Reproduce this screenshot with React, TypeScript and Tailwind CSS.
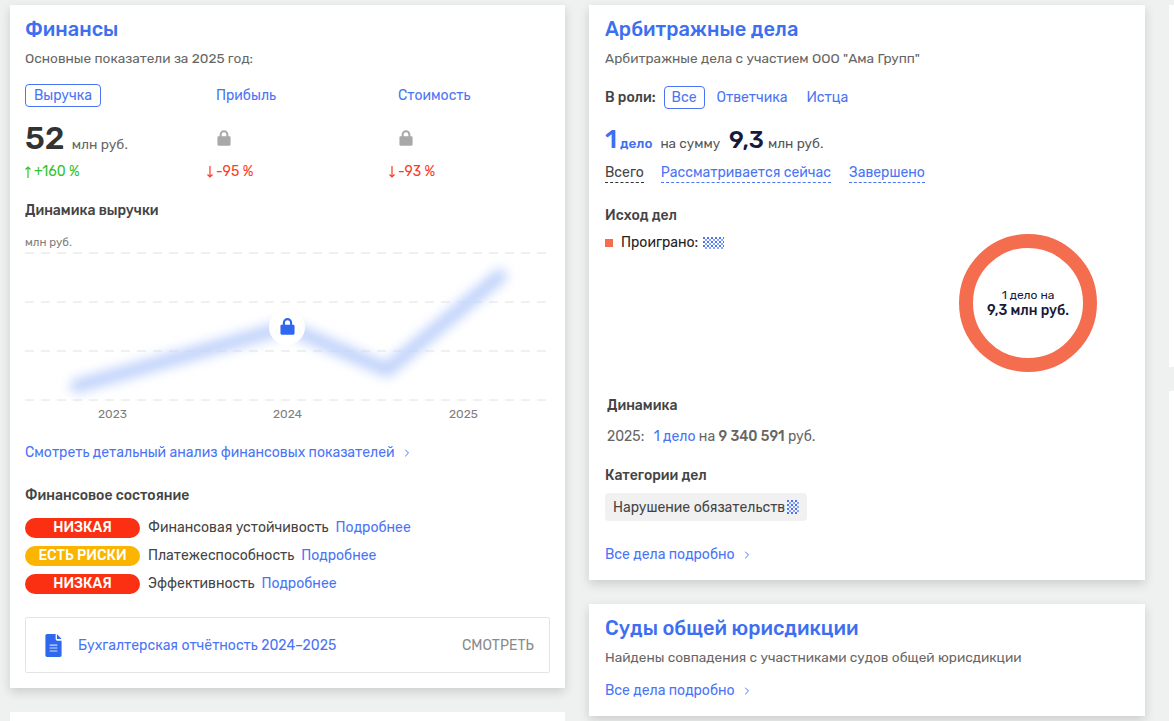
import { ChevronRight } from 'lucide-react'

const font = { fontFamily: 'Rubik, Inter, sans-serif' }

function Lock({ className }: { className: string }) {
  return (
    <svg viewBox="0 0 16 18" className={className} fill="currentColor">
      <path d="M3 7V5a5 5 0 0 1 10 0v2h1.200c.7 0 1.300.6 1.300 1.300v8.200c0 .7-.6 1.300-1.300 1.300H1.800C1.100 17.800.5 17.200.5 16.500V8.300C.5 7.600 1.100 7 1.800 7H3zm2.300 0h5.400V5a2.700 2.700 0 0 0-5.400 0v2z" />
    </svg>
  )
}

function Delta({ up, value }: { up?: boolean; value: string }) {
  return (
    <div className={`flex items-center gap-[2px] text-[14px] leading-5 ${up ? 'text-[#2fc52f]' : 'text-[#fb3b26]'}`}>
      <svg viewBox="0 0 8 12" className="h-3 w-2" fill="none" stroke="currentColor" strokeWidth="1.200">
        {up ? <path d="M4 12V1M1.500 3.500 4 1l2.500 2.500" /> : <path d="M4 0v11M1.500 8.500 4 11l2.500-2.500" />}
      </svg>
      {value}
    </div>
  )
}

function Pattern({ w, h }: { w: number; h: number }) {
  return (
    <svg width={w} height={h} className="inline-block">
      <defs>
        <pattern id={`p${w}`} width="4" height="4" patternUnits="userSpaceOnUse">
          <rect width="2" height="2" fill="#4f74f0" />
          <rect x="2" y="2" width="2" height="2" fill="#8aa4f6" />
        </pattern>
      </defs>
      <rect width={w} height={h} fill={`url(#p${w})`} />
    </svg>
  )
}

function MoreLink({ children }: { children: string }) {
  return (
    <a className="flex items-center gap-[6px] text-[14px] leading-5 text-[#4a74f5]">
      {children}
      <ChevronRight className="h-3 w-3" strokeWidth={2} />
    </a>
  )
}

function StatusRow({ label, name, tone }: { label: string; name: string; tone: string }) {
  return (
    <div className="flex h-[21px] items-center text-[14px]">
      <span className={`h-[20px] w-[115px] rounded-full text-center leading-5 font-medium text-white ${tone}`}>{label}</span>
      <span className="ml-2 text-[#444]">{name}</span>
      <a className="ml-[7px] text-[#4a74f5]">Подробнее</a>
    </div>
  )
}

function Chart() {
  return (
    <div className="relative mt-[2px] h-[184px]">
      <svg viewBox="0 0 525 184" className="absolute inset-0 h-full w-full">
        <defs>
          <filter id="blur" x="-10%" y="-30%" width="120%" height="160%"><feGaussianBlur stdDeviation="6" /></filter>
        </defs>
        {[1, 50, 99, 148].map(y => (
          <line key={y} x1="0" x2="525" y1={y} y2={y} stroke="#e2e2e2" strokeDasharray="9 7" />
        ))}
        <polyline points="52,134 262,75 362,118 475,24" fill="none" stroke="#c0d2fb" strokeWidth="14" strokeLinecap="round" strokeLinejoin="round" filter="url(#blur)" />
        <circle cx="262" cy="75" r="18" fill="white" />
      </svg>
      <Lock className="absolute top-[66px] left-[255px] h-[17px] w-[15px] text-[#2f68ee]" />
      <div className="absolute top-[153px] right-0 left-0 text-[12px] text-[#808080]">
        <span className="absolute left-[73px]">2023</span>
        <span className="absolute left-[248px]">2024</span>
        <span className="absolute left-[424px]">2025</span>
      </div>
    </div>
  )
}

export default function App() {
  return (
    <div className="h-[721px] w-[1174px] overflow-hidden bg-[#eff0f0]" style={font}>
      <div className="flex items-start gap-6 pt-[5px] pl-[10px]">
        <div className="flex w-[555px] shrink-0 flex-col gap-6">
          <section className="h-[683px] bg-white px-[15px] pt-[12px] shadow-[0_4px_10px_rgba(0,0,0,0.15)]">
            <h2 className="text-[20px] leading-6 font-medium text-[#3e6ff0]">Финансы</h2>
            <p className="mt-[7px] text-[13.65px] leading-5 text-[#666]">Основные показатели за 2025 год:</p>
            <div className="mt-[16px] grid grid-cols-[182px_182px_1fr] text-[14px] text-[#4a74f5]">
              <div><span className="inline-block h-[23px] rounded-[4px] border border-[#4a74f5] px-2 leading-[21px]">Выручка</span></div>
              <div className="pl-[9px] leading-[24px]">Прибыль</div>
              <div className="pl-[9px] leading-[24px]">Стоимость</div>
            </div>
            <div className="mt-[11px] grid h-[38px] grid-cols-[182px_182px_1fr] items-center text-[#a8a8a8]">
              <div className="flex items-baseline gap-[7px]">
                <span className="text-[32px] leading-[38px] font-medium text-[#333]">52</span>
                <span className="text-[13.8px] text-[#666]">млн руб.</span>
              </div>
              <div className="pl-[10px]"><Lock className="h-[16px] w-[14px]" /></div>
              <div className="pl-[10px]"><Lock className="h-[16px] w-[14px]" /></div>
            </div>
            <div className="mt-[5px] -ml-px grid grid-cols-[182px_182px_1fr]">
              <Delta up value="+160 %" />
              <Delta value="-95 %" />
              <Delta value="-93 %" />
            </div>
            <h3 className="mt-[19px] text-[14px] leading-5 font-medium text-[#444]">Динамика выручки</h3>
            <p className="mt-[13px] text-[11.5px] leading-4 text-[#808080]">млн руб.</p>
            <Chart />
            <div className="mt-[7px]"><MoreLink>Смотреть детальный анализ финансовых показателей</MoreLink></div>
            <h3 className="mt-[23px] text-[14px] leading-5 font-medium text-[#444]">Финансовое состояние</h3>
            <div className="mt-[11px] flex flex-col gap-[7px]">
              <StatusRow label="НИЗКАЯ" name="Финансовая устойчивость" tone="bg-[#fb3012]" />
              <StatusRow label="ЕСТЬ РИСКИ" name="Платежеспособность" tone="bg-[#fbb400]" />
              <StatusRow label="НИЗКАЯ" name="Эффективность" tone="bg-[#fb3012]" />
            </div>
            <div className="mt-[23px] flex h-[56px] items-center justify-between rounded-[2px] border border-[#e4e4e4] pr-[15px] pl-[18px] text-[14px]">
              <div className="flex items-center gap-[15px]">
                <svg viewBox="0 0 19 27" className="h-[23px] w-[19px]">
                  <path d="M2 0h10v6c0 1 .8 1.800 1.800 1.800H19V25c0 1-.8 2-2 2H2c-1 0-2-1-2-2V2C0 1 1 0 2 0z" fill="#2f68ee" />
                  <path d="M13.500 0 19 6h-5.500z" fill="#2f68ee" />
                  <path d="M5 13h9M5 16.500h9M5 20h9" stroke="#cfdcfb" strokeWidth="1.300" />
                </svg>
                <a className="text-[#4a74f5]">Бухгалтерская отчётность 2024–2025</a>
              </div>
              <span className="text-[#8a8a8a]">СМОТРЕТЬ</span>
            </div>
          </section>
          <section className="h-[100px] bg-white" />
        </div>
        <div className="flex w-[556px] shrink-0 flex-col gap-6">
          <section className="h-[575px] bg-white px-[16px] pt-[12px] shadow-[0_4px_10px_rgba(0,0,0,0.15)]">
            <h2 className="text-[20px] leading-6 font-medium text-[#3e6ff0]">Арбитражные дела</h2>
            <p className="mt-[7px] text-[13.65px] leading-5 text-[#666]">Арбитражные дела с участием ООО "Ама Групп"</p>
            <div className="mt-[18px] flex items-center text-[14px] text-[#4a74f5]">
              <span className="font-medium text-[#444]">В роли:</span>
              <span className="ml-2 h-[23px] rounded-[4px] border border-[#4a74f5] px-[7px] leading-[21px]">Все</span>
              <span className="ml-[12px]">Ответчика</span>
              <span className="ml-[19px]">Истца</span>
            </div>
            <div className="mt-[13px] flex h-[36px] items-baseline">
              <span className="text-[26px] leading-[36px] font-medium text-[#3e6ff0]">1</span>
              <span className="ml-[3px] text-[13.5px] font-medium text-[#3e6ff0]">дело</span>
              <span className="ml-[8px] text-[13.5px] text-[#555]">на сумму</span>
              <span className="ml-[9px] text-[24px] leading-[36px] font-medium text-[#171a3c]">9,3</span>
              <span className="ml-[4px] text-[13.6px] text-[#555]">млн руб.</span>
            </div>
            <div className="mt-[6px] flex gap-[17px] text-[14px] leading-[18px] text-[#4a74f5]">
              <span className="border-b border-dashed border-[#333] text-[#444]">Всего</span>
              <span className="border-b border-dashed border-[#4a74f5]">Рассматривается сейчас</span>
              <span className="ml-px border-b border-dashed border-[#4a74f5]">Завершено</span>
            </div>
            <h3 className="mt-[23px] text-[14px] leading-5 font-medium text-[#444]">Исход дел</h3>
            <div className="relative h-[163px]">
              <div className="mt-[7px] flex items-center text-[14px] leading-5 text-[#222]">
                <span className="h-2 w-2 bg-[#f46d4f]" />
                <span className="mr-[5px] ml-2">Проиграно:</span>
                <Pattern w={21} h={12} />
              </div>
              <div className="absolute top-[1px] left-[354px] flex h-[138px] w-[138px] flex-col items-center justify-center rounded-full border-[14px] border-[#f46d4f] pb-[1px] text-[#171a3c]">
                <span className="text-[12px] leading-4">1 дело на</span>
                <span className="text-[14px] leading-4 font-medium whitespace-nowrap">9,3 млн руб.</span>
              </div>
            </div>
            <div className="pl-[2px]">
              <h3 className="text-[14px] leading-5 font-medium text-[#444]">Динамика</h3>
              <p className="mt-[11px] text-[14px] leading-5 text-[#666]">
                2025: <a className="ml-[6px] text-[#4a74f5]">1 дело</a> на <b className="font-medium">9 340 591</b> руб.
              </p>
            </div>
            <h3 className="mt-[19px] text-[14px] leading-5 font-medium text-[#444]">Категории дел</h3>
            <div className="mt-[7px] inline-flex h-[28px] items-center gap-[2px] rounded-[4px] bg-[#f1f1f1] px-2 text-[14px] text-[#444]">
              Нарушение обязательств <Pattern w={12} h={14} />
            </div>
            <div className="mt-[24px]"><MoreLink>Все дела подробно</MoreLink></div>
          </section>
          <section className="h-[112px] bg-white px-[16px] pt-[12px] shadow-[0_4px_10px_rgba(0,0,0,0.15)]">
            <h2 className="text-[20px] leading-6 font-medium text-[#3e6ff0]">Суды общей юрисдикции</h2>
            <p className="mt-[7px] text-[13.65px] leading-5 text-[#666]">Найдены совпадения с участниками судов общей юрисдикции</p>
            <div className="mt-[14px]"><MoreLink>Все дела подробно</MoreLink></div>
          </section>
        </div>
        <div className="flex w-[556px] shrink-0 flex-col gap-6">
          <section className="h-[362px] bg-white" />
          <section className="h-[330px] bg-white" />
        </div>
      </div>
    </div>
  )
}
